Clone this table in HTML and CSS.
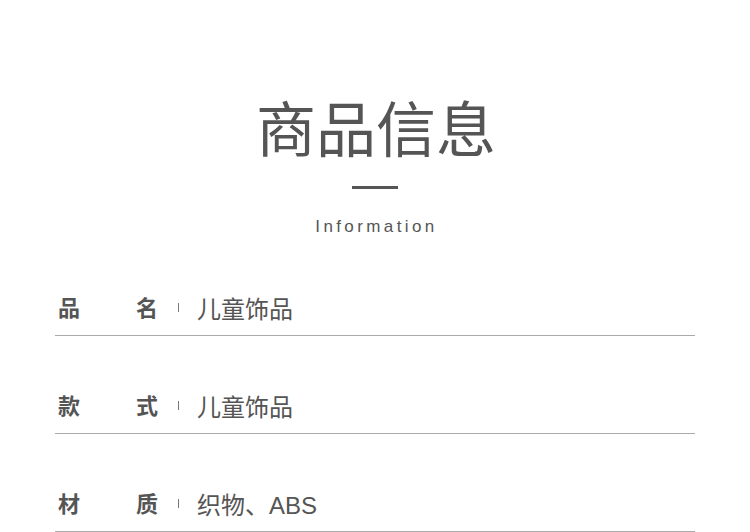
FILE: index.html
```html
<!DOCTYPE html>
<html lang="zh">
<head>
<meta charset="utf-8">
<link rel="stylesheet" href="styles.css">
</head>
<body>
<div class="page">
  <header class="head">
    <h1 class="title">商品信息</h1>
    <div class="dash"></div>
    <div class="sub">Information</div>
  </header>
  <div class="rows">
    <div class="row">
      <span class="label">品名</span>
      <span class="sep"></span>
      <span class="value">儿童饰品</span>
    </div>
    <div class="row">
      <span class="label">款式</span>
      <span class="sep"></span>
      <span class="value">儿童饰品</span>
    </div>
    <div class="row">
      <span class="label">材质</span>
      <span class="sep"></span>
      <span class="value">织物、ABS</span>
    </div>
  </div>
</div>
</body>
</html>
```
FILE: styles.css
```css
html, body {
  margin: 0;
  padding: 0;
  background: #fff;
}
body {
  font-family: "Noto Sans CJK SC", "Noto Sans", sans-serif;
  color: #555;
}
.page {
  width: 750px;
  height: 532px;
  overflow: hidden;
  padding: 0 55px;
  box-sizing: border-box;
}
.head {
  display: flex;
  flex-direction: column;
  align-items: center;
  padding-top: 96px;
}
.title {
  margin: 0;
  font-size: 60px;
  line-height: 60px;
  font-weight: 400;
  color: #555;
  padding-left: 2px;
}
.dash {
  width: 46px;
  height: 3px;
  background: #555;
  margin-top: 30px;
}
.sub {
  margin-top: 28px;
  font-family: "Liberation Sans", sans-serif;
  font-size: 17px;
  line-height: 20px;
  letter-spacing: 3.4px;
  color: #555;
  padding-left: 3px;
}
.rows {
  display: flex;
  flex-direction: column;
  padding-top: 1px;
}
.row {
  display: flex;
  align-items: center;
  height: 46px;
  padding-bottom: 5px;
  margin-top: 46px;
  border-bottom: 1px solid #aaa;
}
.label {
  width: 103px;
  padding-left: 3px;
  box-sizing: border-box;
  font-size: 22px;
  line-height: 30px;
  font-weight: 700;
  text-align: justify;
  text-align-last: justify;
  color: #555;
  margin-bottom: 2px;
}
.sep {
  width: 1px;
  height: 9px;
  background: #777;
  margin-left: 20px;
}
.value {
  margin-left: 18px;
  margin-top: 5px;
  font-family: "Liberation Sans", "Noto Sans CJK SC", sans-serif;
  font-size: 24px;
  line-height: 34px;
  color: #555;
}
```
